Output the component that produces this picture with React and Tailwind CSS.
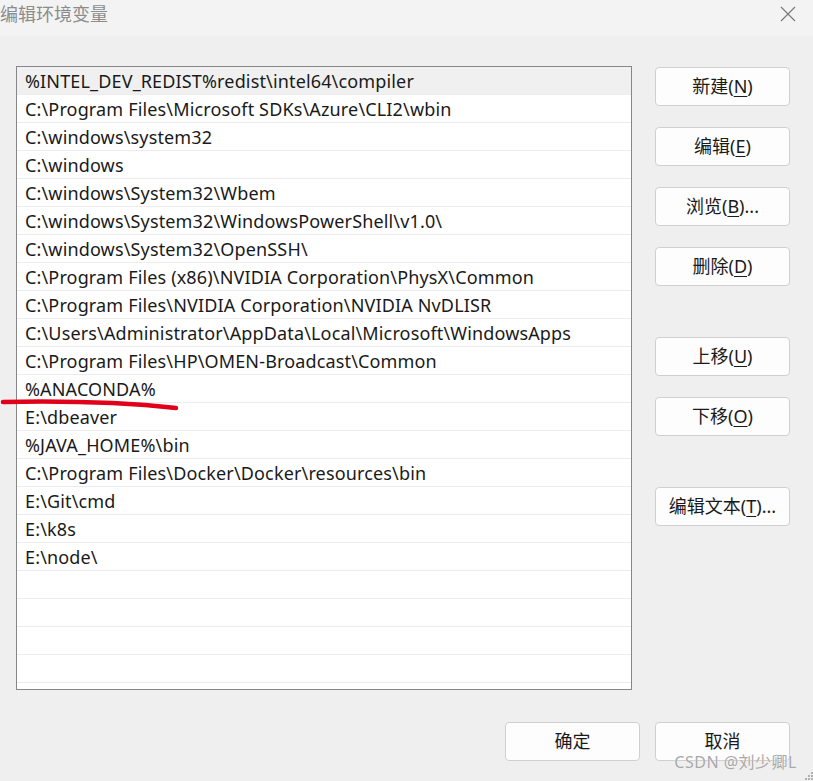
import React from "react";

const paths = [
  "%INTEL_DEV_REDIST%redist\\intel64\\compiler",
  "C:\\Program Files\\Microsoft SDKs\\Azure\\CLI2\\wbin",
  "C:\\windows\\system32",
  "C:\\windows",
  "C:\\windows\\System32\\Wbem",
  "C:\\windows\\System32\\WindowsPowerShell\\v1.0\\",
  "C:\\windows\\System32\\OpenSSH\\",
  "C:\\Program Files (x86)\\NVIDIA Corporation\\PhysX\\Common",
  "C:\\Program Files\\NVIDIA Corporation\\NVIDIA NvDLISR",
  "C:\\Users\\Administrator\\AppData\\Local\\Microsoft\\WindowsApps",
  "C:\\Program Files\\HP\\OMEN-Broadcast\\Common",
  "%ANACONDA%",
  "E:\\dbeaver",
  "%JAVA_HOME%\\bin",
  "C:\\Program Files\\Docker\\Docker\\resources\\bin",
  "E:\\Git\\cmd",
  "E:\\k8s",
  "E:\\node\\",
];

const rows = [...paths, "", "", "", "", "", ""];

function Btn({ label, hot, tail = "", className = "" }) {
  return (
    <button
      className={`h-[39px] w-[135px] rounded-[4px] border border-[#d0d0d0] bg-[#fdfdfd] text-[18px] text-[#1a1a1a] ${className}`}
    >
      {label}
      {hot && (
        <>
          (<span className="underline underline-offset-[3px]">{hot}</span>){tail}
        </>
      )}
    </button>
  );
}

export default function App() {
  return (
    <div
      className="relative flex h-[781px] w-[813px] flex-col overflow-hidden bg-[#efefef]"
      style={{ fontFamily: '"Segoe UI", "Noto Sans", "Noto Sans CJK SC", sans-serif' }}
    >
      {/* title bar */}
      <div className="flex h-[36px] items-center justify-between bg-[#f3f3f3]">
        <span className="-mt-[8px] text-[18px] text-[#8c8c8c]">编辑环境变量</span>
        <svg width="16" height="16" viewBox="0 0 16 16" className="mr-[17px] -mt-[8px]">
          <path d="M1 1 L15 15 M15 1 L1 15" stroke="#7a7a7a" strokeWidth="1.2" />
        </svg>
      </div>

      <div className="flex pl-4 pt-[30px]">
        {/* list */}
        <div className="h-[624px] w-[616px] overflow-hidden border border-[#86868b] bg-white">
          {rows.map((p, i) => (
            <div
              key={i}
              className={`flex h-[28px] items-center border-b border-[#ececec] pl-[8px] pt-[2px] text-[18px] tracking-[0.15px] text-[#1a1a1a] ${
                i === 0 ? "bg-[#f0f0f0]" : ""
              }`}
            >
              {p}
            </div>
          ))}
        </div>

        {/* side buttons */}
        <div className="ml-[23px] mt-px flex flex-col">
          <Btn label="新建" hot="N" />
          <Btn label="编辑" hot="E" className="mt-[21px]" />
          <Btn label="浏览" hot="B" tail="..." className="mt-[21px]" />
          <Btn label="删除" hot="D" className="mt-[21px]" />
          <Btn label="上移" hot="U" className="mt-[51px]" />
          <Btn label="下移" hot="O" className="mt-[21px]" />
          <Btn label="编辑文本" hot="T" tail="..." className="mt-[51px]" />
        </div>
      </div>

      {/* bottom buttons */}
      <div className="mt-[32px] flex justify-end gap-[15px] pr-[23px]">
        <Btn label="确定" />
        <Btn label="取消" />
      </div>

      {/* red hand-drawn mark */}
      <svg className="absolute left-0 top-[396px]" width="182" height="18" viewBox="0 0 182 18">
        <path
          d="M3 6 C 50 5, 120 6, 176 12"
          stroke="#e0001a"
          strokeWidth="4.5"
          strokeLinecap="round"
          fill="none"
        />
      </svg>

      {/* watermark */}
      <span
        className="absolute bottom-[7px] right-[16px] text-[16px] tracking-[0.5px] text-[#a8a8a8]"
        style={{ textShadow: "0 0 1px #fff" }}
      >
        CSDN @刘少卿L
      </span>

      {/* resize grip */}
      <svg className="absolute bottom-0 right-0" width="12" height="10" viewBox="0 0 12 10">
        {[
          [10, 1],
          [7, 4],
          [10, 4],
          [4, 7],
          [7, 7],
          [10, 7],
        ].map(([x, y], i) => (
          <rect key={i} x={x} y={y} width="2" height="2" fill="#b0b0b0" />
        ))}
      </svg>
    </div>
  );
}
